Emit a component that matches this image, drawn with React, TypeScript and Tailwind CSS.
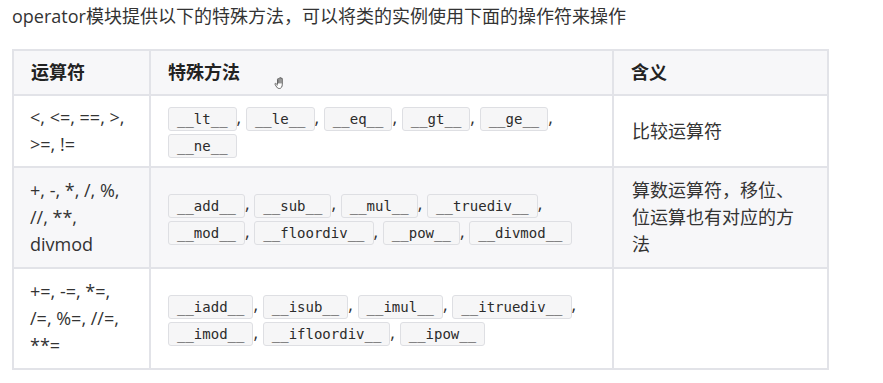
import React from 'react'

const rows = [
    {
        ops: ['<, <=, ==, >,', '>=, !='],
        methods: ['__lt__', '__le__', '__eq__', '__gt__', '__ge__', '__ne__'],
        meaning: '比较运算符',
        height: 'h-[72px]',
        bg: 'bg-white',
    },
    {
        ops: ['+, -, *, /, %,', '//, **,', 'divmod'],
        methods: ['__add__', '__sub__', '__mul__', '__truediv__', '__mod__', '__floordiv__', '__pow__', '__divmod__'],
        meaning: '算数运算符，移位、位运算也有对应的方法',
        height: 'h-[101px]',
        bg: 'bg-[#f7f7f9]',
    },
    {
        ops: ['+=, -=, *=,', '/=, %=, //=,', '**='],
        methods: ['__iadd__', '__isub__', '__imul__', '__itruediv__', '__imod__', '__ifloordiv__', '__ipow__'],
        meaning: '',
        height: 'h-[101px]',
        bg: 'bg-white',
    },
]

function Chip({ name }: { name: string }) {
    return (
        <code className="inline-block h-[24px] px-[8px] align-middle leading-[22px] text-[14px] text-[#2b2b2b] font-['DejaVu_Sans_Mono',monospace] bg-[#f6f6f7] border border-[#dedfe3] rounded-[3px]">
            {name}
        </code>
    )
}

function HandCursor() {
    return (
        <svg className="absolute left-[274px] top-[76px]" width="13" height="15" viewBox="0 0 13 15" fill="none">
            <path
                d="M3.5 8V3.2c0-.7 1.2-.7 1.2 0V7M4.7 2.4c0-.7 1.2-.7 1.2 0V7M5.9 2c0-.7 1.2-.7 1.2 0v5M7.1 2.6c0-.7 1.2-.7 1.2 0v5.6c0 2.4-1 4.3-3 4.3-1.6 0-2.4-1-3.2-2.4L1 8.2c-.3-.6.5-1.1 1-.6l1.5 1.4"
                stroke="#555"
                strokeWidth="0.9"
                strokeLinecap="round"
                strokeLinejoin="round"
                fill="#fff"
            />
        </svg>
    )
}

export default function App() {
    return (
        <div className="relative w-[883px] h-[383px] bg-white text-[#333] font-['Open_Sans','Noto_Sans_CJK_SC',sans-serif] overflow-hidden">
            <p className="pl-[12px] pt-[3px] text-[18px] leading-[27px]">
                operator模块提供以下的特殊方法，可以将类的实例使用下面的操作符来操作
            </p>

            <table className="ml-[12px] mt-[19px] w-[815px] table-fixed border-collapse border-2 border-[#e2e3e8] text-[18px] leading-[27px]">
                <colgroup>
                    <col className="w-[137px]" />
                    <col className="w-[463px]" />
                    <col className="w-[215px]" />
                </colgroup>
                <thead>
                    <tr className="h-[45px] bg-[#f7f7f9]">
                        <th className="border-2 border-[#e2e3e8] px-[17px] text-left font-bold text-[#222]">运算符</th>
                        <th className="border-2 border-[#e2e3e8] px-[17px] text-left font-bold text-[#222]">特殊方法</th>
                        <th className="border-2 border-[#e2e3e8] px-[17px] text-left font-bold text-[#222]">含义</th>
                    </tr>
                </thead>
                <tbody>
                    {rows.map((row, i) => (
                        <tr key={i} className={`${row.height} ${row.bg}`}>
                            <td className="border-2 border-[#e2e3e8] px-[16px] align-middle">
                                {row.ops.map((line, j) => (
                                    <div key={j}>{line}</div>
                                ))}
                            </td>
                            <td className="border-2 border-[#e2e3e8] px-[17px] align-middle">
                                <div className="leading-[27px]">
                                    {row.methods.map((m, j) => (
                                        <React.Fragment key={m}>
                                            <Chip name={m} />
                                            {j < row.methods.length - 1 ? ', ' : ''}
                                        </React.Fragment>
                                    ))}
                                </div>
                            </td>
                            <td className="border-2 border-[#e2e3e8] px-[18px] align-middle">{row.meaning}</td>
                        </tr>
                    ))}
                </tbody>
            </table>

            <HandCursor />
        </div>
    )
}
